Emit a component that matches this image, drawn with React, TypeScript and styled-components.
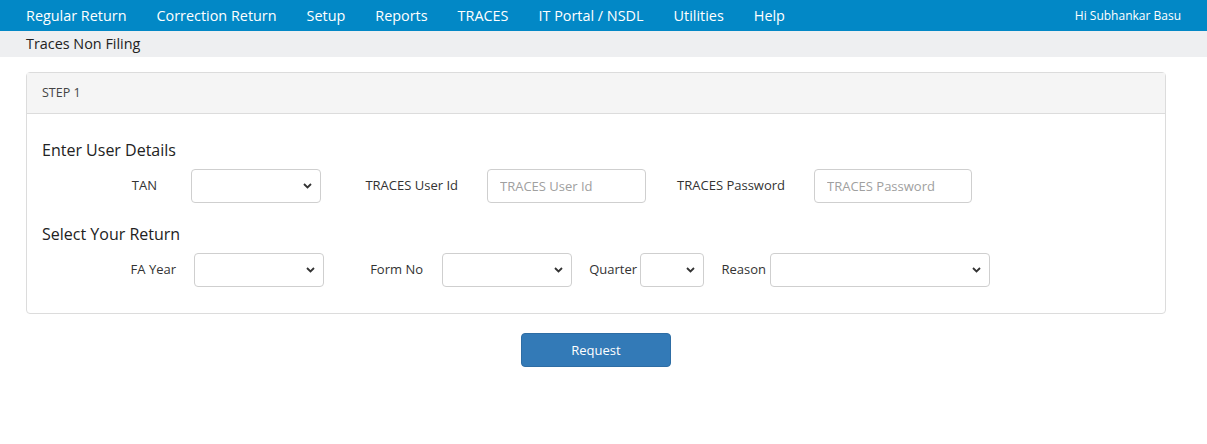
import React from 'react'
import styled, { createGlobalStyle } from 'styled-components'

const GlobalStyle = createGlobalStyle`
  html, body {
    margin: 0;
    padding: 0;
    background: #fff;
    font-family: 'Open Sans', 'Noto Sans', 'Liberation Sans', sans-serif;
    color: #333;
  }
`

const TopNav = styled.div`
  display: flex;
  align-items: center;
  height: 31px;
  background: #0288c6;
  padding: 0 26px;
  box-sizing: border-box;
`

const NavMenu = styled.div`
  display: flex;
  gap: 30px;
  flex: 1;
`

const NavItem = styled.span`
  color: #fff;
  font-size: 14.4px;
  line-height: 31px;
  white-space: nowrap;
`

const UserName = styled.span`
  color: #fff;
  font-size: 12px;
`

const SubBar = styled.div`
  height: 26px;
  background: #eeeff1;
  padding-left: 26px;
  font-size: 14.4px;
  line-height: 26px;
  color: #222;
`

const Content = styled.div`
  padding: 15px 41px 0 26px;
`

const Panel = styled.div`
  border: 1px solid #dcdcdc;
  border-radius: 4px;
`

const PanelHeader = styled.div`
  height: 40px;
  background: #f5f5f5;
  border-bottom: 1px solid #dcdcdc;
  padding-left: 15px;
  font-size: 12.5px;
  line-height: 40px;
  color: #444;
`

const PanelBody = styled.div`
  padding: 24px 15px 26px;
`

const SectionTitle = styled.div`
  font-size: 16px;
  line-height: 24px;
  color: #222;
`

const FormRow = styled.div<{ $mb?: number }>`
  display: flex;
  align-items: center;
  margin-top: 7px;
  margin-bottom: ${(p) => p.$mb ?? 0}px;
`

const Label = styled.label<{ $w: number; $pr: number }>`
  width: ${(p) => p.$w}px;
  padding-right: ${(p) => p.$pr}px;
  box-sizing: border-box;
  text-align: right;
  font-size: 13px;
  color: #333;
  white-space: nowrap;
  margin-top: -2px;
`

const SelectWrap = styled.div<{ $w: number }>`
  position: relative;
  width: ${(p) => p.$w}px;
  height: 34px;
`

const SelectBox = styled.select`
  appearance: none;
  width: 100%;
  height: 100%;
  border: 1px solid #cfcfcf;
  border-radius: 4px;
  background: #fff;
  box-sizing: border-box;
  font-family: inherit;
  font-size: 13px;
  padding: 0 24px 0 10px;
`

const Chevron = styled.svg`
  position: absolute;
  right: 9px;
  top: 14px;
  pointer-events: none;
`

const TextInput = styled.input<{ $w: number }>`
  width: ${(p) => p.$w}px;
  height: 34px;
  border: 1px solid #cfcfcf;
  border-radius: 4px;
  box-sizing: border-box;
  padding: 0 12px;
  font-family: inherit;
  font-size: 13px;
  color: #333;
  &::placeholder {
    color: #a0a0a0;
  }
`

const Actions = styled.div`
  display: flex;
  justify-content: center;
  padding-top: 19px;
`

const RequestButton = styled.button`
  width: 150px;
  height: 34px;
  background: #337ab7;
  border: 1px solid #2e6da4;
  border-radius: 4px;
  color: #fff;
  font-family: inherit;
  font-size: 13px;
`

function Select({ w }: { w: number }) {
  return (
    <SelectWrap $w={w}>
      <SelectBox>
        <option value="" />
      </SelectBox>
      <Chevron width="9" height="6" viewBox="0 0 9 6">
        <polyline points="1,1 4.5,4.5 8,1" fill="none" stroke="#333" strokeWidth="1.8" />
      </Chevron>
    </SelectWrap>
  )
}

const menu = ['Regular Return', 'Correction Return', 'Setup', 'Reports', 'TRACES', 'IT Portal / NSDL', 'Utilities', 'Help']

export default function App() {
  return (
    <>
      <GlobalStyle />
      <TopNav>
        <NavMenu>
          {menu.map((m) => (
            <NavItem key={m}>{m}</NavItem>
          ))}
        </NavMenu>
        <UserName>Hi Subhankar Basu</UserName>
      </TopNav>
      <SubBar>Traces Non Filing</SubBar>
      <Content>
        <Panel>
          <PanelHeader>STEP 1</PanelHeader>
          <PanelBody>
            <SectionTitle>Enter User Details</SectionTitle>
            <FormRow $mb={19}>
              <Label $w={149} $pr={34}>TAN</Label>
              <Select w={130} />
              <Label $w={166} $pr={29}>TRACES User Id</Label>
              <TextInput $w={159} placeholder="TRACES User Id" />
              <Label $w={168} $pr={29}>TRACES Password</Label>
              <TextInput $w={158} type="password" placeholder="TRACES Password" />
            </FormRow>
            <SectionTitle>Select Your Return</SectionTitle>
            <FormRow>
              <Label $w={152} $pr={18}>FA Year</Label>
              <Select w={130} />
              <Label $w={118} $pr={19}>Form No</Label>
              <Select w={130} />
              <Label $w={68} $pr={3}>Quarter</Label>
              <Select w={64} />
              <Label $w={66} $pr={4}>Reason</Label>
              <Select w={220} />
            </FormRow>
          </PanelBody>
        </Panel>
        <Actions>
          <RequestButton>Request</RequestButton>
        </Actions>
      </Content>
    </>
  )
}
